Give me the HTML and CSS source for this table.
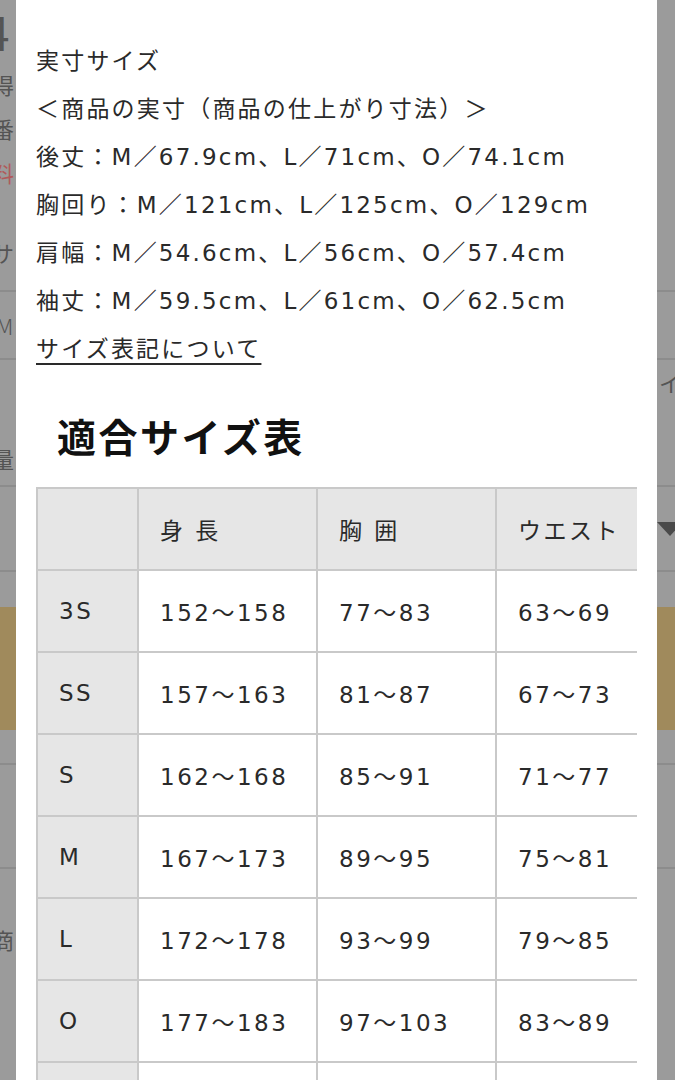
FILE: index.html
```html
<!DOCTYPE html>
<html lang="ja">
<head>
<meta charset="utf-8">
<link rel="stylesheet" href="styles.css">
</head>
<body>
<div class="screen">
  <div class="page">
    <div class="prow r-num"><span class="ltext big">4</span><span></span></div>
    <div class="prow r-a"><span class="ltext">得</span><span></span></div>
    <div class="prow r-b"><span class="ltext">番</span><span></span></div>
    <div class="prow r-c"><span class="ltext red">料</span><span></span></div>
    <div class="prow r-d line"><span class="ltext">サ</span><span></span></div>
    <div class="prow r-e line"><span class="ltext thin">M</span><span></span></div>
    <div class="prow r-f"><span></span><span class="rtext">イ</span></div>
    <div class="prow r-g line"><span class="ltext">量</span><span></span></div>
    <div class="prow r-h line"><span class="ltext thin">|</span><span class="tri"></span></div>
    <div class="prow r-gap"></div>
    <div class="gold"></div>
    <div class="prow r-i line"></div>
    <div class="prow r-j line"></div>
    <div class="prow r-k"><span class="ltext">商</span><span></span></div>
  </div>

  <div class="modal">
    <div class="spec">
      <p>実寸サイズ</p>
      <p>＜商品の実寸（商品の仕上がり寸法）＞</p>
      <p>後丈：M／67.9cm、L／71cm、O／74.1cm</p>
      <p>胸回り：M／121cm、L／125cm、O／129cm</p>
      <p>肩幅：M／54.6cm、L／56cm、O／57.4cm</p>
      <p>袖丈：M／59.5cm、L／61cm、O／62.5cm</p>
      <p><a class="link">サイズ表記について</a></p>
    </div>
    <h2 class="title">適合サイズ表</h2>
    <div class="tablewrap">
      <table class="sizes">
        <thead>
          <tr><th class="c0"></th><th>身 長</th><th>胸 囲</th><th>ウエスト</th><th>ヒップ</th></tr>
        </thead>
        <tbody>
          <tr><th class="c0">3S</th><td>152〜158</td><td>77〜83</td><td>63〜69</td><td>80〜86</td></tr>
          <tr><th class="c0">SS</th><td>157〜163</td><td>81〜87</td><td>67〜73</td><td>84〜90</td></tr>
          <tr><th class="c0">S</th><td>162〜168</td><td>85〜91</td><td>71〜77</td><td>88〜94</td></tr>
          <tr><th class="c0">M</th><td>167〜173</td><td>89〜95</td><td>75〜81</td><td>92〜98</td></tr>
          <tr><th class="c0">L</th><td>172〜178</td><td>93〜99</td><td>79〜85</td><td>96〜102</td></tr>
          <tr><th class="c0">O</th><td>177〜183</td><td>97〜103</td><td>83〜89</td><td>100〜106</td></tr>
          <tr><th class="c0">XO</th><td>182〜188</td><td>101〜107</td><td>87〜93</td><td>104〜110</td></tr>
        </tbody>
      </table>
    </div>
  </div>
</div>
</body>
</html>
```

FILE: styles.css
```css
html, body {
  margin: 0;
  padding: 0;
}
body {
  background: #9b9b9b;
  font-family: "Noto Sans CJK JP", "Noto Sans", sans-serif;
  color: #222;
}
.screen {
  position: relative;
  width: 675px;
  height: 1080px;
  overflow: hidden;
}

/* dimmed page underneath */
.page {
  display: flex;
  flex-direction: column;
  background: #9b9b9b;
  color: #545454;
}
.prow {
  display: flex;
  justify-content: space-between;
  align-items: center;
  font-size: 22px;
  box-sizing: border-box;
}
.prow.line {
  border-bottom: 2px solid #8c8c8c;
}
.ltext {
  margin-left: -8px;
}
.ltext.big {
  font-size: 46px;
  margin-left: -16px;
}
.ltext.red {
  color: #b05a5a;
}
.ltext.thin {
  font-weight: 300;
  margin-left: -4px;
}
.rtext {
  margin-right: -6px;
}
.tri {
  width: 0;
  height: 0;
  border-left: 13px solid transparent;
  border-right: 13px solid transparent;
  border-top: 14px solid #4a4a4a;
  margin-right: -8px;
}
.r-num { height: 62px; }
.r-a { height: 44px; }
.r-b { height: 44px; }
.r-c { height: 44px; }
.r-d { height: 98px; padding-top: 20px; }
.r-e { height: 68px; }
.r-f { height: 60px; padding-bottom: 16px; }
.r-g { height: 67px; padding-top: 10px; }
.r-h { height: 85px; }
.r-gap { height: 35px; }
.gold { height: 123px; background: #a08a5c; }
.r-i { height: 35px; }
.r-j { height: 104px; }
.r-k { height: 140px; }

/* modal */
.modal {
  position: absolute;
  top: 0;
  left: 16px;
  width: 641px;
  height: 1080px;
  background: #fff;
  box-sizing: border-box;
  padding: 37px 0 0 20px;
  overflow: hidden;
  font-family: "DejaVu Sans", "Noto Sans CJK JP", sans-serif;
  color: #2a2a2a;
}
.spec p {
  margin: 0;
  font-size: 23px;
  line-height: 48px;
  letter-spacing: 2.2px;
  white-space: nowrap;
}
.link {
  color: #2a2a2a;
  text-decoration: underline;
  text-underline-offset: 6px;
  text-decoration-thickness: 2px;
}
.title {
  margin: 36px 0 0 21px;
  font-family: "Noto Sans CJK JP", sans-serif;
  font-size: 39px;
  font-weight: 700;
  line-height: 52px;
  letter-spacing: 2.5px;
  color: #111;
}
.tablewrap {
  margin-top: 26px;
  width: 601px;
  overflow: hidden;
}
.sizes {
  border-collapse: collapse;
  table-layout: fixed;
  width: 818px;
  font-size: 23px;
  letter-spacing: 2.5px;
}
.sizes th, .sizes td {
  border: 2px solid #c9c9c9;
  height: 82px;
  padding: 0 0 0 21px;
  text-align: left;
  font-weight: 400;
  box-sizing: border-box;
  white-space: nowrap;
}
.sizes th.c0 {
  width: 101px;
  background: #e6e6e6;
}
.sizes thead th {
  background: #e6e6e6;
  width: 179px;
}
.sizes td {
  background: #fff;
}
```
